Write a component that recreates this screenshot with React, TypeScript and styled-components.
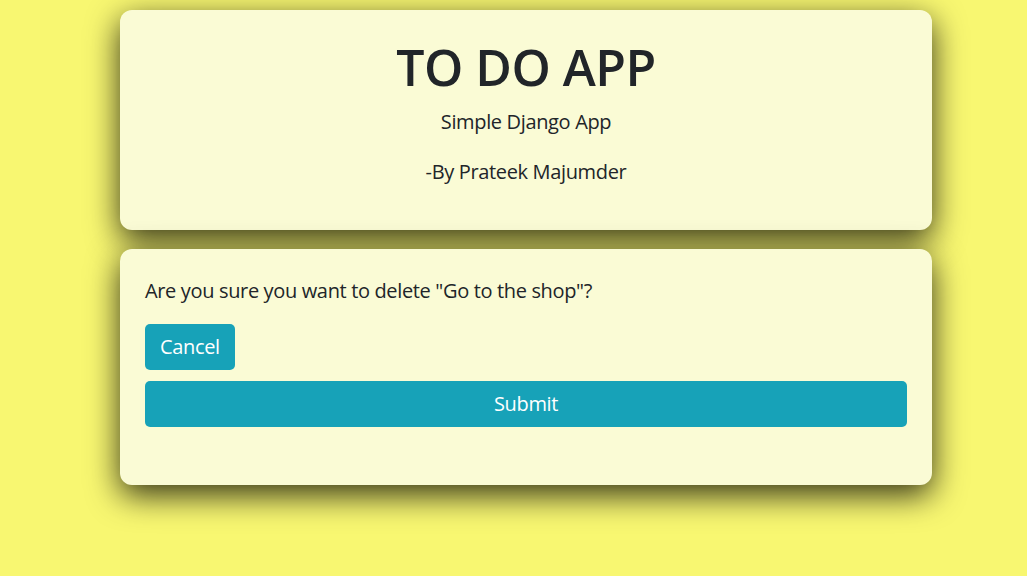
import React from "react";
import styled, { createGlobalStyle } from "styled-components";

const GlobalStyle = createGlobalStyle`
  html, body {
    margin: 0;
    padding: 0;
    background: #f8f771;
    min-height: 100%;
  }
  body {
    font-family: "Segoe UI", "Open Sans", "Noto Sans", sans-serif;
    color: #212529;
    overflow: hidden;
  }
`;

const Page = styled.div`
  width: 837px;
  margin: 0 auto;
  padding: 10px 0 0 25px;
  box-sizing: border-box;
  display: flex;
  flex-direction: column;
  gap: 19px;
  min-height: 576px;
`;

const Card = styled.section<{ $center?: boolean }>`
  background: #fafbd5;
  border-radius: 12px;
  box-shadow: 0 10px 32px rgba(0, 0, 0, 0.8);
  padding: 27px 25px 23px;
  display: flex;
  flex-direction: column;
  align-items: ${(p) => (p.$center ? "center" : "stretch")};
  text-align: ${(p) => (p.$center ? "center" : "left")};
`;

const Title = styled.h1`
  margin: 0 0 10px;
  font-size: 50px;
  font-weight: 600;
  line-height: 60px;
  letter-spacing: -0.5px;
`;

const Text = styled.p<{ $mb?: number }>`
  margin: 0 0 ${(p) => p.$mb ?? 20}px;
  font-size: 20px;
  line-height: 30px;
  letter-spacing: -0.35px;
`;

const Button = styled.button<{ $block?: boolean }>`
  font-family: inherit;
  font-size: 20px;
  line-height: 30px;
  letter-spacing: -0.35px;
  color: #fff;
  background: #17a2b8;
  border: none;
  border-radius: 5px;
  padding: 8px 15px;
  align-self: ${(p) => (p.$block ? "stretch" : "flex-start")};
  cursor: pointer;
`;

const Form = styled.form`
  display: flex;
  flex-direction: column;
  gap: 11px;
  margin-bottom: 35px;
`;

export default function App() {
  return (
    <>
      <GlobalStyle />
      <Page>
        <Card $center>
          <Title>TO DO APP</Title>
          <Text>Simple Django App</Text>
          <Text>-By Prateek Majumder</Text>
        </Card>
        <Card>
          <Text $mb={18}>Are you sure you want to delete "Go to the shop"?</Text>
          <Form onSubmit={(e) => e.preventDefault()}>
            <Button type="button">Cancel</Button>
            <Button type="submit" $block>
              Submit
            </Button>
          </Form>
        </Card>
      </Page>
    </>
  );
}
